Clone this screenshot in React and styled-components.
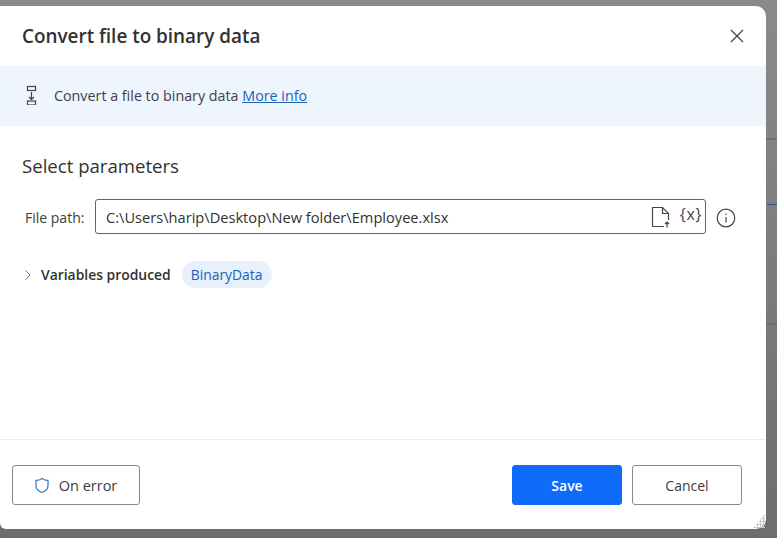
import React from 'react';
import styled, { createGlobalStyle } from 'styled-components';

const GlobalStyle = createGlobalStyle`
  html, body {
    margin: 0;
    height: 100%;
    overflow: hidden;
    background: #7b7b7b;
    font-family: "Open Sans", "Noto Sans", sans-serif;
  }
  #root { height: 100%; }
`;

const Backdrop = styled.div`
  height: 538px;
  padding: 6px 11px 9px 0;
  box-sizing: border-box;
  background:
    linear-gradient(#34507e, #34507e) right 0 top 204px / 10px 1px no-repeat,
    linear-gradient(#6f6f6f, #6f6f6f) right 0 top 138px / 11px 2px no-repeat,
    linear-gradient(#6f6f6f, #6f6f6f) right 0 top 323px / 11px 2px no-repeat,
    linear-gradient(#8a8a8a, #7c7c7c 50%, #6e6e6e);
`;

const Dialog = styled.div`
  position: relative;
  height: 100%;
  display: flex;
  flex-direction: column;
  background: #fff;
  border-radius: 0 10px 10px 6px;
`;

const ResizeGrip = styled.div`
  position: absolute;
  right: 1px;
  bottom: 1px;
  width: 12px;
  height: 14px;
  background: radial-gradient(circle, #c4c8cc 1px, transparent 1.2px) 0 0 / 3px 3px;
  clip-path: polygon(100% 0, 100% 100%, 0 100%);
`;

const Header = styled.div`
  height: 60px;
  display: flex;
  align-items: center;
  justify-content: space-between;
  padding: 0 21px 0 22px;
  flex-shrink: 0;
`;

const Title = styled.h1`
  margin: 0 0 1px;
  font-size: 18.9px;
  font-weight: 600;
  color: #323130;
`;

const IconButton = styled.button`
  display: flex;
  padding: 0;
  border: none;
  background: none;
`;

const Banner = styled.div`
  height: 60px;
  display: flex;
  align-items: center;
  gap: 16px;
  padding: 0 0 2px 26px;
  box-sizing: border-box;
  background: #eff5fc;
  font-size: 14.3px;
  color: #3f3f46;
  flex-shrink: 0;
`;

const MoreInfo = styled.a`
  color: #1a62b8;
  text-decoration: underline;
`;

const Body = styled.div`
  flex: 1;
  padding: 27px 25px 0 25px;
`;

const SectionTitle = styled.h2`
  margin: 0 0 21px -3px;
  font-size: 18.6px;
  font-weight: 400;
  color: #323130;
`;

const Field = styled.div`
  display: flex;
  align-items: center;
`;

const FieldLabel = styled.label`
  width: 70px;
  font-size: 14px;
  color: #3c3c3c;
  padding-top: 1px;
`;

const InputBox = styled.div`
  width: 611px;
  height: 35px;
  box-sizing: border-box;
  display: flex;
  align-items: center;
  padding: 0 3px 0 10px;
  border: 1px solid #1f77ad;
  border-radius: 3px;
`;

const InputText = styled.span`
  flex: 1;
  font-size: 14.64px;
  font-weight: 500;
  color: #323130;
`;

const VariableGlyph = styled.span`
  margin: 0 0 5px 9px;
  font-size: 16px;
  letter-spacing: 0.6px;
  color: #444;
`;

const InfoButton = styled(IconButton)`
  margin: 2px 0 0 10px;
`;

const VariablesRow = styled.div`
  display: flex;
  align-items: center;
  margin: 27px 0 0 -2px;
`;

const VariablesLabel = styled.span`
  margin-left: 10px;
  font-size: 13.9px;
  font-weight: 600;
  color: #323130;
`;

const Chip = styled.span`
  margin-left: 11px;
  height: 27px;
  display: flex;
  align-items: center;
  padding: 0 9px;
  border-radius: 14px;
  background: #e7f0fb;
  color: #1a62b8;
  font-size: 13.9px;
`;

const Footer = styled.div`
  height: 90px;
  flex-shrink: 0;
  box-sizing: border-box;
  display: flex;
  align-items: center;
  padding: 0 24px 0 12px;
  border-top: 1px solid #ececec;
`;

const Button = styled.button`
  width: ${props => props.$width || '110px'};
  height: 40px;
  display: flex;
  align-items: center;
  justify-content: center;
  padding: 1px 0 0;
  border-radius: 3px;
  font-family: inherit;
  font-size: 14px;
  font-weight: ${props => (props.$primary ? 600 : 500)};
  color: ${props => (props.$primary ? '#fff' : '#3c3c3c')};
  background: ${props => (props.$primary ? '#0f6cfb' : '#fff')};
  border: 1px solid ${props => (props.$primary ? '#0f6cfb' : '#8a8a8a')};
  margin-left: ${props => props.$gap || '0'};
`;

const ErrorButton = styled(Button)`
  gap: 9px;
  padding-right: 1px;
  font-size: 14.5px;
`;

const Spacer = styled.div`
  flex: 1;
`;

function App() {
  return (
    <Backdrop>
      <GlobalStyle />
      <Dialog>
        <Header>
          <Title>Convert file to binary data</Title>
          <IconButton aria-label="Close">
            <svg width="16" height="16" viewBox="0 0 16 16" fill="none" stroke="#444" strokeWidth="1.3">
              <path d="M2 2l12 12M14 2L2 14" />
            </svg>
          </IconButton>
        </Header>
        <Banner>
          <svg width="12" height="20" viewBox="0 0 12 20" fill="none" stroke="#444" strokeWidth="1.2">
            <rect x="1.500" y="1.500" width="8" height="4" />
            <rect x="1.500" y="16" width="8" height="4" />
            <path d="M5.500 7v7.500M3 12l2.500 2.500L8 12" />
          </svg>
          <span>
            Convert a file to binary data <MoreInfo>More info</MoreInfo>
          </span>
        </Banner>
        <Body>
          <SectionTitle>Select parameters</SectionTitle>
          <Field>
            <FieldLabel>File path:</FieldLabel>
            <InputBox>
              <InputText>C:\Users\harip\Desktop\New folder\Employee.xlsx</InputText>
              <svg width="20" height="22" viewBox="0 0 20 22" fill="none" stroke="#444" strokeWidth="1.2">
                <path d="M13 20.500H1.500V1.500h10l6 6V14M11.500 1.500v6h6" />
                <path d="M16 21.500v-5.500M14 18l2-2 2 2" />
              </svg>
              <VariableGlyph>{'{x}'}</VariableGlyph>
            </InputBox>
            <InfoButton aria-label="Info">
              <svg width="20" height="20" viewBox="0 0 20 20" fill="none" stroke="#444" strokeWidth="1.2">
                <circle cx="10" cy="10" r="8.800" />
                <path d="M10 9v5.500M10 5.500v1.500" />
              </svg>
            </InfoButton>
          </Field>
          <VariablesRow>
            <svg width="8" height="12" viewBox="0 0 8 12" fill="none" stroke="#777" strokeWidth="1">
              <path d="M2.500 1.500L7 6l-4.500 4.500" />
            </svg>
            <VariablesLabel>Variables produced</VariablesLabel>
            <Chip>BinaryData</Chip>
          </VariablesRow>
        </Body>
        <Footer>
          <ErrorButton $width="128px">
            <svg width="16" height="17" viewBox="0 0 16 17" fill="none" stroke="#3f7fc4" strokeWidth="1.3">
              <path d="M8 1.500c2 1.500 4 2 6 2v5c0 3.500-3 6-6 7-3-1-6-3.500-6-7v-5c2 0 4-.5 6-2z" />
            </svg>
            On error
          </ErrorButton>
          <Spacer />
          <Button $primary>Save</Button>
          <Button $gap="10px">Cancel</Button>
        </Footer>
        <ResizeGrip />
      </Dialog>
    </Backdrop>
  );
}

export default App;
